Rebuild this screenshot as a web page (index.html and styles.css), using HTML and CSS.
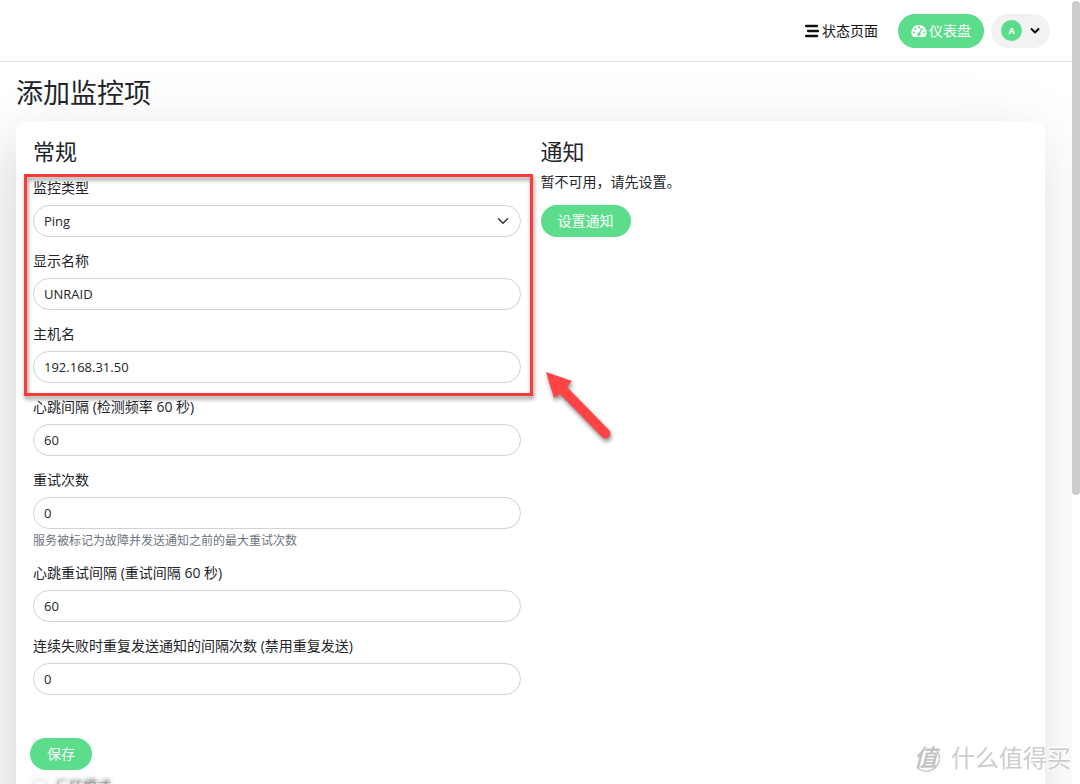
FILE: index.html
```html
<!DOCTYPE html>
<html lang="zh-CN">
<head>
<meta charset="utf-8">
<meta name="viewport" content="width=device-width, initial-scale=1">
<title>添加监控项</title>
<link rel="stylesheet" href="styles.css">
</head>
<body>
<div class="page">
  <header class="topbar">
    <a class="status-link" href="#">
      <svg class="icon" width="14" height="14" viewBox="0 0 14 14" aria-hidden="true"><path d="M1 2h11M3 7h10M1 12h11" stroke="currentColor" stroke-width="2.4" stroke-linecap="round"/></svg>
      状态页面
    </a>
    <a class="btn dashboard-link" href="#">
      <svg class="icon" width="16" height="14" viewBox="0 0 16 14" aria-hidden="true"><path fill="currentColor" d="M8 1a7.500 7.500 0 0 0-6.500 11.300Q1.800 13 2.600 13H13.400Q14.200 13 14.500 12.300A7.500 7.500 0 0 0 8 1z"/><g fill="#5cdd8b"><circle cx="8" cy="3.300" r="1"/><circle cx="4.300" cy="5" r="1"/><circle cx="2.900" cy="8.600" r="1"/><circle cx="13.100" cy="8.600" r="1"/><circle cx="12.200" cy="5.600" r=".7"/><circle cx="8" cy="10.300" r="1.700"/></g><path d="M8.200 10 10.600 4.300" stroke="#5cdd8b" stroke-width="1.200" stroke-linecap="round"/></svg>
      仪表盘
    </a>
    <button class="profile" type="button" aria-label="用户菜单">
      <span class="avatar">A</span>
      <svg width="10" height="8" viewBox="0 0 10 8" aria-hidden="true"><path d="M1.500 2 5 5.500 8.500 2" fill="none" stroke="#111" stroke-width="2" stroke-linecap="round" stroke-linejoin="round"/></svg>
    </button>
  </header>

  <main class="content">
    <h1 class="title">添加监控项</h1>
    <form class="card">
      <div class="columns">
        <section>
          <h2 class="heading">常规</h2>
          <div class="highlight">
            <div class="field">
              <label for="type">监控类型</label>
              <select class="control select" id="type"><option>Ping</option></select>
            </div>
            <div class="field">
              <label for="name">显示名称</label>
              <input class="control" id="name" type="text" value="UNRAID">
            </div>
            <div class="field">
              <label for="host">主机名</label>
              <input class="control" id="host" type="text" value="192.168.31.50">
            </div>
            <svg class="arrow" width="76" height="80" viewBox="0 0 76 80" aria-hidden="true"><path d="M5 4 31 13 26 19 68 62A4.500 4.500 0 0 1 61 69L19 26 13 30Z" fill="#fd4343"/></svg>
          </div>
          <div class="field">
            <label for="interval">心跳间隔 (检测频率 60 秒)</label>
            <input class="control" id="interval" type="text" inputmode="numeric" value="60">
          </div>
          <div class="field">
            <label for="retries">重试次数</label>
            <input class="control" id="retries" type="text" inputmode="numeric" value="0">
            <div class="help">服务被标记为故障并发送通知之前的最大重试次数</div>
          </div>
          <div class="field">
            <label for="retry-interval">心跳重试间隔 (重试间隔 60 秒)</label>
            <input class="control" id="retry-interval" type="text" inputmode="numeric" value="60">
          </div>
          <div class="field">
            <label for="resend">连续失败时重复发送通知的间隔次数 (禁用重复发送)</label>
            <input class="control" id="resend" type="text" inputmode="numeric" value="0">
          </div>
          <h2 class="heading advanced">高级</h2>
          <div class="check">
            <input id="invert" type="checkbox">
            <label for="invert">反转模式</label>
          </div>
        </section>
        <section>
          <h2 class="heading">通知</h2>
          <p class="empty">暂不可用，请先设置。</p>
          <button class="btn" type="button">设置通知</button>
        </section>
      </div>
      <div class="actions"><button class="btn" type="submit">保存</button></div>
    </form>
  </main>
</div>
<div class="scrollbar" aria-hidden="true"></div>
<div class="watermark">
  <svg width="32" height="32" viewBox="0 0 32 32" aria-hidden="true"><path d="M20 4A13 13 0 1 1 5 24" fill="none" stroke="#ccc" stroke-width="1.500"/><text class="mark" x="3" y="24">值</text></svg>
  <span>什么值得买</span>
</div>
</body>
</html>
```
FILE: styles.css
```css
* { box-sizing: border-box; }

body {
  margin: 0;
  background: #fff;
  color: #212529;
  font: 14px/20px "Open Sans", "Noto Sans CJK SC", sans-serif;
}

.page {
  height: 100vh;
  margin-right: 8px;
  overflow-x: hidden;
  overflow-y: auto;
  scrollbar-width: none;
}
.scrollbar {
  position: fixed;
  top: 0;
  right: 0;
  width: 8px;
  height: 63vh;
  margin-top: 1px;
  border-radius: 4px;
  background: #ccc;
}

.topbar {
  display: flex;
  align-items: center;
  justify-content: flex-end;
  height: 62px;
  padding: 0 22px 0 16px;
  border-bottom: 1px solid #e2e3e5;
}
.status-link {
  display: flex;
  align-items: center;
  gap: 3px;
  margin-right: 20px;
  color: #111;
  text-decoration: none;
}
.btn {
  display: inline-flex;
  align-items: center;
  justify-content: center;
  height: 32px;
  padding: 0 17px;
  border: 0;
  border-radius: 20px;
  background: #5cdd8b;
  color: #fff;
  font: inherit;
  text-decoration: none;
  cursor: pointer;
}
.dashboard-link {
  gap: 2px;
  height: 34px;
  padding: 0 13px;
  margin-right: 7px;
}
.profile {
  display: flex;
  align-items: center;
  gap: 8px;
  height: 34px;
  padding: 0 10px;
  border: 0;
  border-radius: 20px;
  background: #f2f2f2;
  cursor: pointer;
}
.avatar {
  width: 21px;
  height: 21px;
  border-radius: 50%;
  background: #5cdd8b;
  color: #fff;
  font: bold 9px/21px "Open Sans", sans-serif;
  text-align: center;
}

.content { padding: 15px 27px 0 16px; }
.title {
  margin: 0 0 12px;
  font-size: 27px;
  line-height: 32px;
  font-weight: 400;
}
.card {
  padding: 16px 17px 0;
  border-radius: 10px;
  background: #fff;
  box-shadow: 0 15px 70px rgba(0, 0, 0, .1), -20px 20px 50px rgba(0, 0, 0, .06);
}
.columns {
  display: grid;
  grid-template-columns: 1fr 1fr;
  gap: 20px;
  padding-bottom: 380px;
}
.heading {
  margin: 0 0 7px;
  font-size: 22px;
  line-height: 28px;
  font-weight: 400;
}
.highlight {
  position: relative;
  padding-top: 6px;
}
.highlight::after {
  content: "";
  position: absolute;
  inset: 2px -12px 1px -9px;
  border: 3px solid #fd3b3b;
  filter: drop-shadow(1px 3px 2px rgba(0, 0, 0, .45));
  pointer-events: none;
}
.arrow {
  position: absolute;
  left: calc(100% + 20px);
  bottom: -51px;
  filter: drop-shadow(1px 3px 2px rgba(0, 0, 0, .45));
}
.field { padding-bottom: 14px; }
.field label {
  display: block;
  margin-bottom: 7px;
}
.control {
  display: block;
  width: 100%;
  height: 32px;
  padding: 0 10px;
  border: 1px solid #ced4da;
  border-radius: 20px;
  background: #fff;
  color: #212529;
  font: inherit;
  font-size: 13px;
}
.select {
  appearance: none;
  background: #fff url("data:image/svg+xml,%3Csvg xmlns='http://www.w3.org/2000/svg' viewBox='0 0 16 16'%3E%3Cpath fill='none' stroke='%23343a40' stroke-linecap='round' stroke-linejoin='round' stroke-width='2' d='m2 5 6 6 6-6'/%3E%3C/svg%3E") no-repeat right 11px center / 12px 12px;
}
.help {
  color: #6c757d;
  font-size: 12px;
  line-height: 16px;
  padding-top: 4px;
}
.advanced { margin-top: 26px; }
.check {
  display: flex;
  align-items: center;
  gap: 8px;
  padding-top: 6px;
}
.check input {
  appearance: none;
  width: 14px;
  height: 14px;
  margin: 0;
  border: 1px solid #bfbfbf;
  border-radius: 3px;
}
.empty { margin: 0 0 13px; }

.actions {
  position: sticky;
  bottom: 0;
  margin: 0 -17px;
  padding: 14px;
  border-radius: 0 0 10px 10px;
  background: rgba(255, 255, 255, .2);
  backdrop-filter: blur(2px);
}

.watermark {
  position: fixed;
  right: 9px;
  bottom: 8px;
  display: flex;
  align-items: center;
  gap: 8px;
  color: #ccc;
  font-size: 24px;
  line-height: 36px;
  text-shadow: -1px -1px 0 #fff;
  pointer-events: none;
}
.mark {
  fill: #c4c4c4;
  font-size: 23px;
  font-weight: 700;
  font-style: italic;
}
```
